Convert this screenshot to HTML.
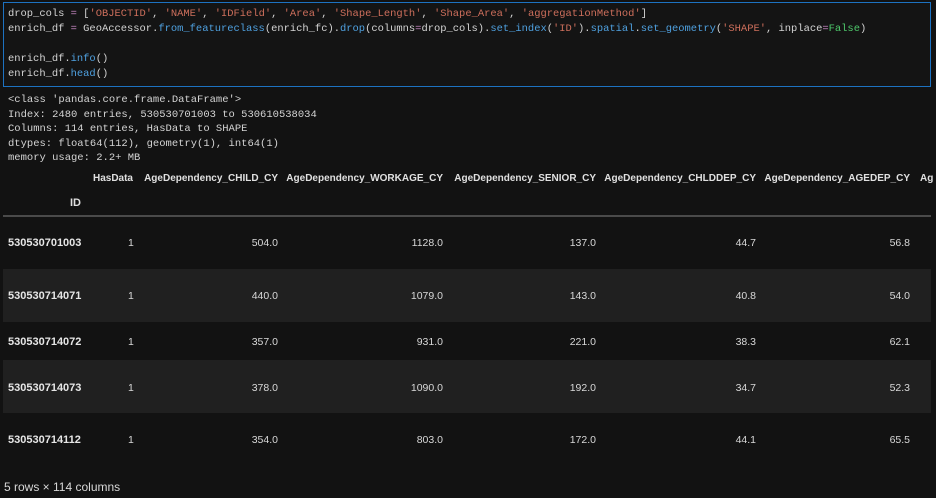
<!DOCTYPE html>
<html><head><meta charset="utf-8"><style>
html,body{margin:0;padding:0;background:#121212;width:936px;height:498px;overflow:hidden;position:relative}
.cell{position:absolute;left:3px;top:2px;width:926px;height:83px;border:1.5px solid #1d72c1;background:#141414}
.code{position:absolute;left:8px;font-family:"Liberation Mono",monospace;font-size:10.45px;color:#d4d4d4;white-space:pre;line-height:15px}
.s{color:#ce6f5c}.f{color:#4fa1e0}.k{color:#c586c0}.g{color:#4ec96b}
.out{position:absolute;left:8px;top:93px;font-family:"Liberation Mono",monospace;font-size:10.5px;color:#d4d4d4;white-space:pre;line-height:14.6px}
.t{position:absolute;font-family:"Liberation Sans",sans-serif;font-size:10.5px;color:#d8d8d8;white-space:nowrap}
.h{font-size:10px;font-weight:bold;color:#e0e0e0}
.b{font-weight:bold;color:#e6e6e6;font-size:11px}
.r{transform:translateX(-100%)}
.stripe{position:absolute;left:3px;width:928px;background:#202020}
.hl{position:absolute;left:3px;width:928px;top:215px;height:2px;background:#4a4a4a}
</style></head><body>
<div class="cell"></div>
<div class="code" style="top:7px">drop_cols <span class="k">=</span> [<span class="s">'OBJECTID'</span>, <span class="s">'NAME'</span>, <span class="s">'IDField'</span>, <span class="s">'Area'</span>, <span class="s">'Shape_Length'</span>, <span class="s">'Shape_Area'</span>, <span class="s">'aggregationMethod'</span>]
enrich_df <span class="k">=</span> GeoAccessor.<span class="f">from_featureclass</span>(enrich_fc).<span class="f">drop</span>(columns<span class="k">=</span>drop_cols).<span class="f">set_index</span>(<span class="s">'ID'</span>).<span class="f">spatial</span>.<span class="f">set_geometry</span>(<span class="s">'SHAPE'</span>, inplace<span class="k">=</span><span class="g">False</span>)

enrich_df.<span class="f">info</span>()
enrich_df.<span class="f">head</span>()</div>
<div class="out">&lt;class 'pandas.core.frame.DataFrame'&gt;
Index: 2480 entries, 530530701003 to 530610538034
Columns: 114 entries, HasData to SHAPE
dtypes: float64(112), geometry(1), int64(1)
memory usage: 2.2+ MB</div>
<div class="stripe" style="top:269px;height:53px"></div>
<div class="stripe" style="top:360px;height:53px"></div>
<div class="hl"></div>
<div class="t h r" style="left:133px;top:173px">HasData</div>
<div class="t h r" style="left:278px;top:173px">AgeDependency_CHILD_CY</div>
<div class="t h r" style="left:443px;top:173px">AgeDependency_WORKAGE_CY</div>
<div class="t h r" style="left:596px;top:173px">AgeDependency_SENIOR_CY</div>
<div class="t h r" style="left:756px;top:173px">AgeDependency_CHLDDEP_CY</div>
<div class="t h r" style="left:910px;top:173px">AgeDependency_AGEDEP_CY</div>
<div class="t h" style="left:920px;top:173px">Ag</div>
<div class="t h" style="left:70px;top:197px;font-size:11px">ID</div>

<div class="t b" style="left:8px;top:237px">530530701003</div>
<div class="t b" style="left:8px;top:290px">530530714071</div>
<div class="t b" style="left:8px;top:336px">530530714072</div>
<div class="t b" style="left:8px;top:382px">530530714073</div>
<div class="t b" style="left:8px;top:434px">530530714112</div>

<div class="t" style="left:128px;top:237px">1</div>
<div class="t" style="left:128px;top:290px">1</div>
<div class="t" style="left:128px;top:336px">1</div>
<div class="t" style="left:128px;top:382px">1</div>
<div class="t" style="left:128px;top:434px">1</div>

<div class="t r" style="left:278px;top:237px">504.0</div>
<div class="t r" style="left:278px;top:290px">440.0</div>
<div class="t r" style="left:278px;top:336px">357.0</div>
<div class="t r" style="left:278px;top:382px">378.0</div>
<div class="t r" style="left:278px;top:434px">354.0</div>

<div class="t r" style="left:443px;top:237px">1128.0</div>
<div class="t r" style="left:443px;top:290px">1079.0</div>
<div class="t r" style="left:443px;top:336px">931.0</div>
<div class="t r" style="left:443px;top:382px">1090.0</div>
<div class="t r" style="left:443px;top:434px">803.0</div>

<div class="t r" style="left:596px;top:237px">137.0</div>
<div class="t r" style="left:596px;top:290px">143.0</div>
<div class="t r" style="left:596px;top:336px">221.0</div>
<div class="t r" style="left:596px;top:382px">192.0</div>
<div class="t r" style="left:596px;top:434px">172.0</div>

<div class="t r" style="left:756px;top:237px">44.7</div>
<div class="t r" style="left:756px;top:290px">40.8</div>
<div class="t r" style="left:756px;top:336px">38.3</div>
<div class="t r" style="left:756px;top:382px">34.7</div>
<div class="t r" style="left:756px;top:434px">44.1</div>

<div class="t r" style="left:910px;top:237px">56.8</div>
<div class="t r" style="left:910px;top:290px">54.0</div>
<div class="t r" style="left:910px;top:336px">62.1</div>
<div class="t r" style="left:910px;top:382px">52.3</div>
<div class="t r" style="left:910px;top:434px">65.5</div>

<div class="t" style="left:4px;top:480px;font-size:12px;color:#d8d8d8">5 rows × 114 columns</div>
</body></html>
